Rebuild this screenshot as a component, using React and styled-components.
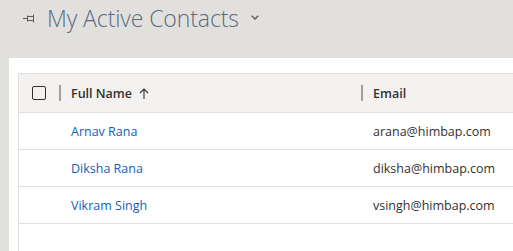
import styled, { createGlobalStyle } from "styled-components";

const GlobalStyle = createGlobalStyle`
  body {
    margin: 0;
    background: #e2e0dd;
    font-family: "Open Sans", "Noto Sans", sans-serif;
  }
`;

const Page = styled.div`
  display: flex;
  flex-direction: column;
  height: 251px;
  overflow: hidden;
`;

const TitleBar = styled.div`
  height: 58px;
  display: flex;
  align-items: flex-start;
  padding: 3px 0 0 23px;
  box-sizing: border-box;
  gap: 10px;
`;

const Title = styled.h1`
  margin: 0;
  font-size: 23px;
  font-weight: 300;
  color: #5b6a81;
  letter-spacing: -0.1px;
  line-height: 30px;
`;

const PinWrap = styled.span`
  display: flex;
  align-items: center;
  height: 30px;
`;

const ChevronWrap = styled.span`
  display: flex;
  align-items: center;
  height: 28px;
  margin-left: 2px;
`;

const Panel = styled.div`
  flex: 1;
  margin-left: 9px;
  background: #fff;
  padding: 15px 0 0 9px;
`;

const Grid = styled.div`
  border-left: 1px solid #e1dfdd;
  border-top: 1px solid #e1dfdd;
  height: 100%;
`;

const Row = styled.div`
  display: grid;
  grid-template-columns: 40px 302px 1fr;
  height: ${(p) => (p.header ? "38px" : "36px")};
  align-items: center;
  background: ${(p) => (p.header ? "#f3f2f1" : "#fff")};
  border-bottom: 1px solid #e1dfdd;
  font-size: 12.5px;
  color: #323130;
`;

const CheckCell = styled.div`
  display: flex;
  align-items: center;
  padding-left: 13px;
`;

const Checkbox = styled.span`
  width: 12px;
  height: 12px;
  border: 1px solid #323130;
  border-radius: 2px;
`;

const HeadCell = styled.div`
  display: flex;
  align-items: center;
  gap: 10px;
  font-weight: 600;
  &::before {
    content: "";
    width: 2px;
    height: 16px;
    background: #a19f9d;
  }
`;

const SortArrow = styled.span`
  display: flex;
  margin-left: -3px;
`;

const Cell = styled.div`
  padding-left: 12px;
  color: ${(p) => (p.link ? "#1160b7" : "#323130")};
`;

const PinIcon = () => (
  <svg width="14" height="10" viewBox="0 0 14 10" fill="none" stroke="#605e5c" strokeWidth="1">
    <path d="M0 5.5h4.5M4.5 2.5v6M5 3.5h5.5v4H5M10.5 1.5v8" />
  </svg>
);

const Chevron = () => (
  <svg width="8" height="5" viewBox="0 0 8 5" fill="none" stroke="#605e5c" strokeWidth="1.5">
    <path d="M0.8 0.8L4 4L7.2 0.8" />
  </svg>
);

const UpArrow = () => (
  <svg width="10" height="11" viewBox="0 0 10 11" fill="none" stroke="#323130" strokeWidth="1.1">
    <path d="M5 11V1M1 5l4-4 4 4" />
  </svg>
);

const contacts = [
  { name: "Arnav Rana", email: "arana@himbap.com" },
  { name: "Diksha Rana", email: "diksha@himbap.com" },
  { name: "Vikram Singh", email: "vsingh@himbap.com" },
];

export default function App() {
  return (
    <Page>
      <GlobalStyle />
      <TitleBar>
        <PinWrap><PinIcon /></PinWrap>
        <Title>My Active Contacts</Title>
        <ChevronWrap><Chevron /></ChevronWrap>
      </TitleBar>
      <Panel>
        <Grid>
          <Row header>
            <CheckCell><Checkbox /></CheckCell>
            <HeadCell>
              Full Name
              <SortArrow><UpArrow /></SortArrow>
            </HeadCell>
            <HeadCell>Email</HeadCell>
          </Row>
          {contacts.map((c) => (
            <Row key={c.email}>
              <div />
              <Cell link>{c.name}</Cell>
              <Cell>{c.email}</Cell>
            </Row>
          ))}
        </Grid>
      </Panel>
    </Page>
  );
}
